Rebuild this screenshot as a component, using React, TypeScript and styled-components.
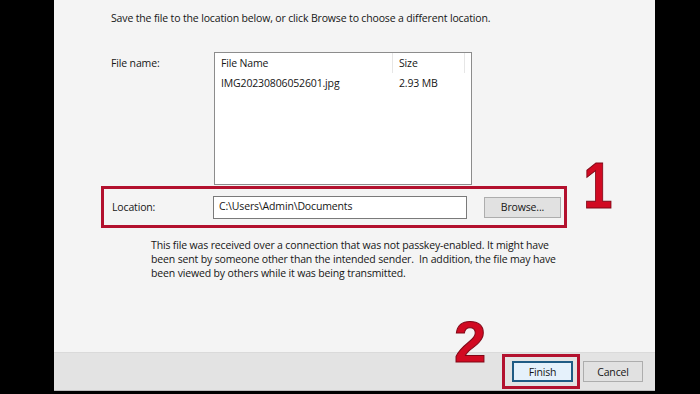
import styled, { createGlobalStyle } from "styled-components";

const GlobalStyle = createGlobalStyle`
  html, body {
    margin: 0;
    padding: 0;
    background: #000;
  }
  #root {
    width: 700px;
    height: 394px;
    overflow: hidden;
  }
`;

const Screen = styled.div`
  display: flex;
  width: 700px;
  height: 394px;
  background: #000;
  font-family: "Open Sans", "Noto Sans", sans-serif;
  font-size: 10.5px;
  letter-spacing: -0.15px;
  color: #161616;
`;

const Dialog = styled.div`
  position: relative;
  display: flex;
  flex-direction: column;
  margin-left: 54px;
  width: 601px;
  height: 391px;
  background: #f4f4f4;
`;

const Body = styled.div`
  flex: 1;
  display: flex;
  flex-direction: column;
`;

const Intro = styled.p`
  margin: 11px 0 0 57px;
  line-height: 14px;
`;

const FileRow = styled.div`
  display: grid;
  grid-template-columns: 103px 258px;
  margin: 27px 0 0 57px;
`;

const Label = styled.span`
  line-height: 14px;
  padding-top: 4px;
`;

const ListBox = styled.div`
  height: 131px;
  border: 1px solid #8c8c8c;
  background: #fff;
  display: flex;
  flex-direction: column;
`;

const ListHeader = styled.div`
  display: grid;
  grid-template-columns: 178px 72px 1fr;
  height: 20px;
  align-items: center;
`;

const HeaderCell = styled.span<{ $divider?: boolean }>`
  padding-left: 6px;
  height: 20px;
  line-height: 20px;
  border-right: ${(p) => (p.$divider ? "1px solid #e6e6e6" : "none")};
  box-sizing: border-box;
`;

const ListRow = styled.div`
  display: grid;
  grid-template-columns: 178px 72px;
  line-height: 20px;
`;

const Cell = styled.span`
  padding-left: 6px;
`;

const LocationRow = styled.div`
  display: flex;
  align-items: center;
  margin: 1px 0 0 47px;
  width: 466px;
  height: 42px;
  box-sizing: border-box;
  border: 3px solid #b3112e;
  padding-left: 8px;
`;

const LocationLabel = styled.span`
  width: 101px;
  line-height: 14px;
`;

const PathInput = styled.div`
  width: 254px;
  height: 23px;
  box-sizing: border-box;
  border: 1px solid #7a7a7a;
  background: #fff;
  padding: 2px 0 0 5px;
  line-height: 14px;
`;

const Button = styled.div<{ $primary?: boolean; $w: number }>`
  width: ${(p) => p.$w}px;
  height: 21px;
  box-sizing: border-box;
  display: flex;
  align-items: center;
  justify-content: center;
  background: ${(p) => (p.$primary ? "#e5f1fb" : "#e1e1e1")};
  border: ${(p) => (p.$primary ? "2px solid #1f5b84" : "1px solid #adadad")};
`;

const Note = styled.p`
  margin: 10px 0 0 97px;
  width: 410px;
  line-height: 14px;
`;

const Footer = styled.div`
  height: 37px;
  background: #e3e3e3;
  border-top: 1px solid #dadada;
  border-bottom: 1px solid #bdbdbd;
  display: flex;
  align-items: center;
  justify-content: flex-end;
  gap: 3px;
  padding-right: 12px;
`;

const Highlight = styled.div`
  padding: 0 4px 0 7px;
  border: 3px solid #b3112e;
  height: 35px;
  box-sizing: border-box;
  display: flex;
  align-items: center;
`;

const Marker = styled.span<{ $size: number; $top: number; $left: number }>`
  position: absolute;
  top: ${(p) => p.$top}px;
  left: ${(p) => p.$left}px;
  font-family: "Liberation Sans", Arial, sans-serif;
  font-weight: 700;
  font-size: ${(p) => p.$size}px;
  line-height: 1;
  letter-spacing: 0;
  color: #d10a22;
  -webkit-text-stroke: 1px #7e0716;
`;

export default function App() {
  return (
    <Screen>
      <GlobalStyle />
      <Dialog>
        <Body>
          <Intro>
            Save the file to the location below, or click Browse to choose a
            different location.
          </Intro>
          <FileRow>
            <Label>File name:</Label>
            <ListBox>
              <ListHeader>
                <HeaderCell $divider>File Name</HeaderCell>
                <HeaderCell $divider>Size</HeaderCell>
                <span />
              </ListHeader>
              <ListRow>
                <Cell>IMG20230806052601.jpg</Cell>
                <Cell>2.93 MB</Cell>
              </ListRow>
            </ListBox>
          </FileRow>
          <LocationRow>
            <LocationLabel>Location:</LocationLabel>
            <PathInput>C:\Users\Admin\Documents</PathInput>
            <Button $w={77} style={{ marginLeft: 17 }}>
              Browse...
            </Button>
          </LocationRow>
          <Note>
            This file was received over a connection that was not
            passkey-enabled. It might have been sent by someone other than the
            intended sender. &nbsp;In addition, the file may have been viewed by
            others while it was being transmitted.
          </Note>
        </Body>
        <Footer>
          <Highlight>
            <Button $primary $w={61}>
              Finish
            </Button>
          </Highlight>
          <Button $w={60}>Cancel</Button>
        </Footer>
        <Marker $size={64} $top={154} $left={526} style={{ transform: "scaleX(0.82)" }}>
          1
        </Marker>
        <Marker $size={58} $top={313} $left={400}>
          2
        </Marker>
      </Dialog>
    </Screen>
  );
}
